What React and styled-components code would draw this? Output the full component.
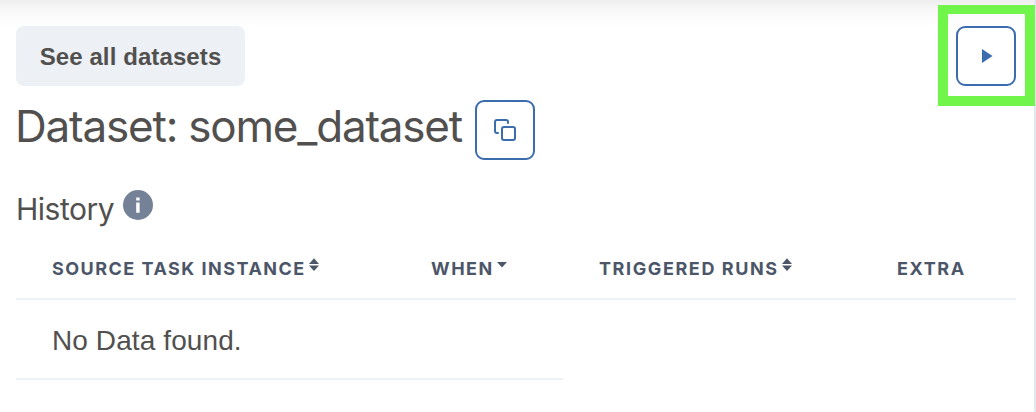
import React from "react";
import styled, { createGlobalStyle } from "styled-components";

const GlobalStyle = createGlobalStyle`
  * { box-sizing: border-box; }
  body { margin: 0; background: #fff; color: #51504f; font-family: "Liberation Sans", Arial, sans-serif; overflow: hidden; }
  h2, h3 { margin: 0; font-weight: 400; font-family: Inter, sans-serif; }
`;

const Panel = styled.main`
  width: 1036px;
  height: 412px;
  padding: 26px 18px 0 16px;
  border-right: 2px solid #e2e8f0;
  background: linear-gradient(#eeeeee 0, #f5f5f5 7px, #fbfbfb 16px, #fff 28px);
`;

const Toolbar = styled.div`
  display: flex;
  justify-content: space-between;
  height: 60px;
`;

const LinkButton = styled.button`
  width: 229px;
  height: 60px;
  padding: 2px 0 0 0;
  border: 0;
  border-radius: 8px;
  background: #edf1f6;
  color: #51504f;
  font: 700 24px "Liberation Sans", Arial, sans-serif;
  letter-spacing: 0.1px;
  white-space: nowrap;
`;

const IconButton = styled.button`
  display: flex;
  align-items: center;
  justify-content: center;
  flex: none;
  width: 60px;
  height: 60px;
  padding: 0;
  border: 2px solid #3a6cae;
  border-radius: 9px;
  background: #fff;
  color: #3a6cae;
`;

const Highlighted = styled.div`
  position: relative;
  &::after {
    content: "";
    position: absolute;
    inset: -21px -19px -20px -18px;
    border: 10px solid #72f54a;
    border-top-width: 9px;
    pointer-events: none;
  }
`;

const PlayIcon = styled.svg`
  width: 12px;
  height: 14px;
  margin-left: 2px;
`;

const TitleRow = styled.div`
  display: flex;
  align-items: center;
  height: 60px;
  margin-top: 14px;
`;

const Title = styled.h2`
  width: 459px;
  font-size: 44px;
  line-height: 52px;
  padding-bottom: 8px;
  letter-spacing: -1.2px;
  text-indent: -1px;
  white-space: nowrap;
`;

const SectionRow = styled.div`
  display: flex;
  height: 44px;
  margin-top: 27px;
`;

const SectionTitle = styled.h3`
  width: 107px;
  font-size: 30px;
  line-height: 44px;
  letter-spacing: -0.5px;
  white-space: nowrap;
`;

const InfoIcon = styled.svg`
  width: 30px;
  height: 30px;
  margin-top: 3px;
`;

const Table = styled.div`
  display: grid;
  grid-template-columns: 379px 168px 298px 155px;
  margin-top: 9px;
`;

const HeaderCell = styled.div`
  display: flex;
  height: 60px;
  padding: 18px 0 0 36px;
  border-bottom: 2px solid #edf2f7;
  color: #4c5669;
  font: 700 18px/22px Inter, sans-serif;
  letter-spacing: ${(p) => p.$tracking}px;
  white-space: nowrap;
`;

const SortIcon = styled.svg`
  width: 12px;
  height: 14px;
  margin: 0 0 0 2px;
`;

const EmptyCell = styled.div`
  grid-column: span 2;
  height: 80px;
  padding: 24px 0 0 36px;
  border-bottom: 2px solid #edf2f7;
  font-size: 28px;
  line-height: 34px;
  letter-spacing: 0.1px;
  white-space: nowrap;
`;

const columns = [
  { label: "SOURCE TASK INSTANCE", sort: "both", tracking: 1.48 },
  { label: "WHEN", sort: "desc", tracking: 1.5 },
  { label: "TRIGGERED RUNS", sort: "both", tracking: 1.6 },
  { label: "EXTRA", tracking: 1.6 },
];

function Sort({ kind }) {
  return (
    <SortIcon viewBox="0 0 12 14" fill="#4c5669">
      {kind === "both" && <path d="M6 0.3 11 6H1Z" />}
      {kind === "both" ? <path d="M1 7.6h10L6 13Z" /> : <path d="M1 4h10L6 9.6Z" />}
    </SortIcon>
  );
}

export default function App() {
  return (
    <>
      <GlobalStyle />
      <Panel>
        <Toolbar>
          <LinkButton>See all datasets</LinkButton>
          <Highlighted>
            <IconButton aria-label="Run">
              <PlayIcon viewBox="0 0 12 14" fill="currentColor">
                <path d="M1 0v14l10.5-7Z" />
              </PlayIcon>
            </IconButton>
          </Highlighted>
        </Toolbar>
        <TitleRow>
          <Title>Dataset: some_dataset</Title>
          <IconButton aria-label="Copy">
            <svg width="24" height="24" viewBox="0 0 24 24" fill="none" stroke="currentColor" strokeWidth="2" strokeLinecap="round" strokeLinejoin="round">
              <rect x="9" y="9" width="13" height="13" rx="2" />
              <path d="M5 15H4a2 2 0 0 1-2-2V4a2 2 0 0 1 2-2h9a2 2 0 0 1 2 2v1" />
            </svg>
          </IconButton>
        </TitleRow>
        <SectionRow>
          <SectionTitle>History</SectionTitle>
          <InfoIcon viewBox="0 0 30 30">
            <circle cx="15" cy="15" r="15" fill="#748197" />
            <path d="M13.2 7.4h3.4v3.2h-3.4zM13.2 12.4h3.4v10.4h-3.4z" fill="#fff" />
          </InfoIcon>
        </SectionRow>
        <Table>
          {columns.map((c) => (
            <HeaderCell key={c.label} $tracking={c.tracking}>
              {c.label}
              {c.sort && <Sort kind={c.sort} />}
            </HeaderCell>
          ))}
          <EmptyCell>No Data found.</EmptyCell>
        </Table>
      </Panel>
    </>
  );
}
